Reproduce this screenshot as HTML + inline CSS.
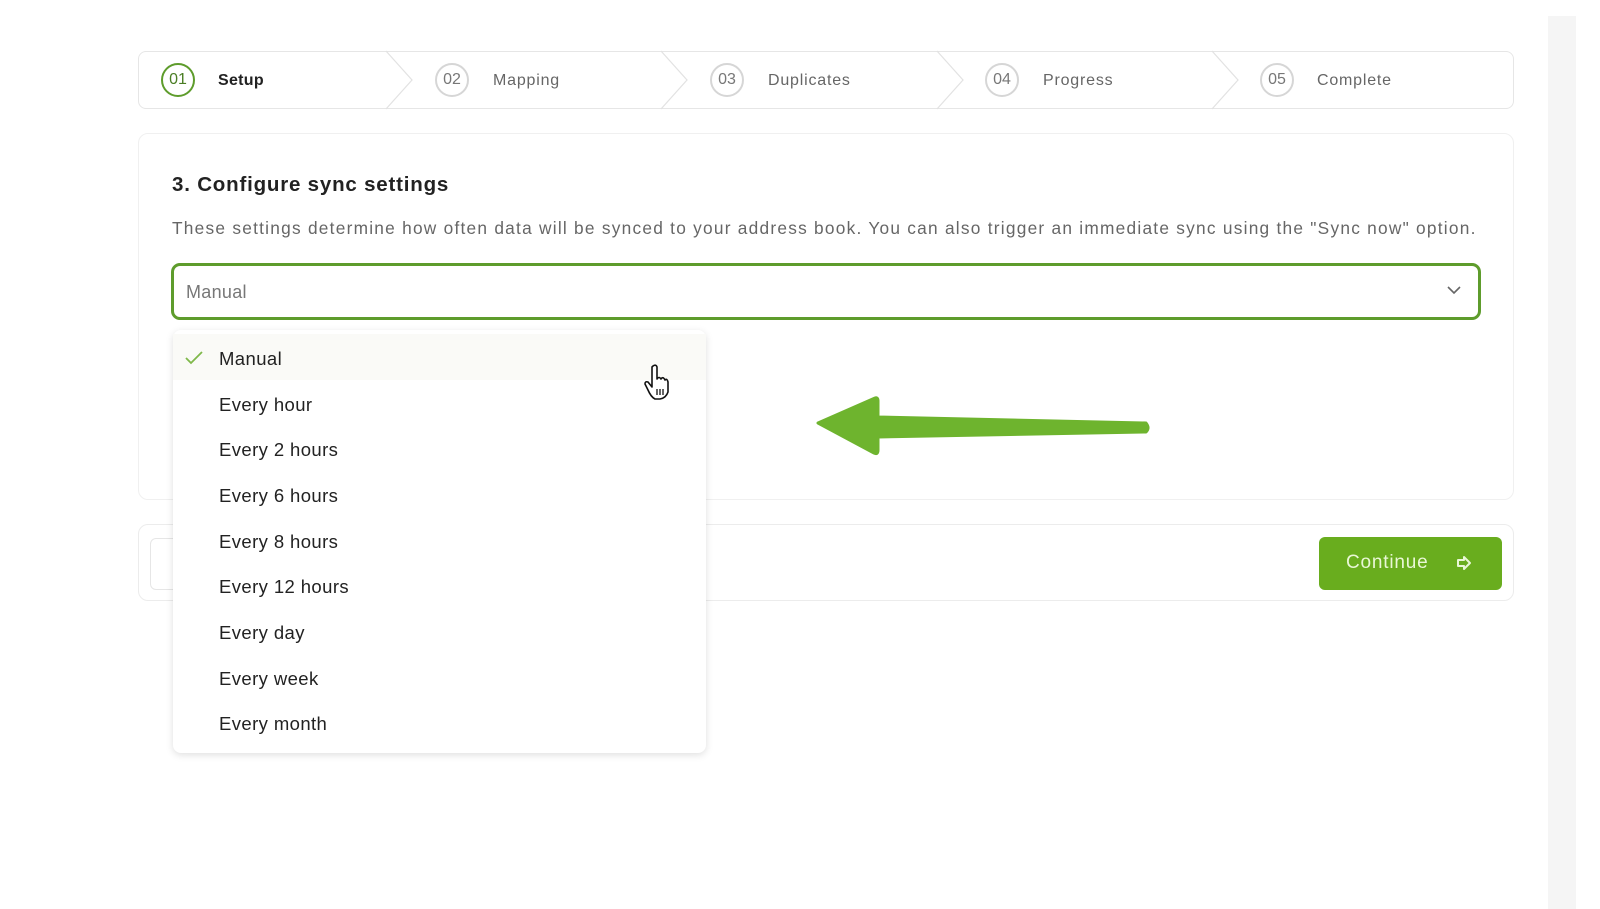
<!DOCTYPE html>
<html><head><meta charset="utf-8"><style>
*{box-sizing:border-box;margin:0;padding:0}
body{width:1600px;height:909px;background:#fff;font-family:"Liberation Sans",sans-serif;position:relative;overflow:hidden;color:#222}
.abs{position:absolute}
.steps{left:138px;top:51px;width:1376px;height:58px;border:1px solid #e6e6e6;border-radius:8px}
.circ{width:34px;height:34px;border-radius:50%;border:2px solid #d6d6d6;color:#777;font-size:16px;display:flex;align-items:center;justify-content:center;top:63px}
.lbl{top:72px;font-size:16px;color:#666;letter-spacing:0.8px}
.card{left:138px;top:133px;width:1376px;height:367px;border:1px solid #f0f0f0;border-radius:10px}
.sel{left:171px;top:263px;width:1310px;height:57px;border:3px solid #5e9c2c;border-radius:9px;font-size:18px;color:#777;padding:16px 0 0 12px;letter-spacing:0.3px}
.dd{left:173px;top:330px;width:533px;height:423px;background:#fff;border-radius:8px;box-shadow:0 2px 8px rgba(0,0,0,.13)}
.it{position:absolute;left:46px;font-size:18.5px;color:#222;letter-spacing:0.4px}
.bot{left:138px;top:524px;width:1376px;height:77px;border:1px solid #ececec;border-radius:10px}
.btn{left:1319px;top:537px;width:183px;height:53px;background:#69ad1e;border-radius:6px;color:#e9f7d6;font-size:19px;padding:15px 0 0 27px;letter-spacing:0.8px}
</style></head><body>
<div class="abs" style="left:1548px;top:16px;width:28px;height:893px;background:#f5f5f5"></div>
<div class="abs steps"></div>
<svg class="abs" style="left:0;top:0" width="1600" height="120">
<g fill="none" stroke="#e2e2e2" stroke-width="1.2">
<path d="M386 51 L412 80 L386 109"/><path d="M661 51 L687 80 L661 109"/><path d="M937 51 L963 80 L937 109"/><path d="M1212 51 L1238 80 L1212 109"/></g></svg>
<div class="abs circ" style="left:161px;border-color:#5e9c2c;color:#4a7d24">01</div>
<div class="abs lbl" style="left:218px;color:#222;font-weight:bold;letter-spacing:0.3px">Setup</div>
<div class="abs circ" style="left:435px">02</div><div class="abs lbl" style="left:493px">Mapping</div>
<div class="abs circ" style="left:710px">03</div><div class="abs lbl" style="left:768px">Duplicates</div>
<div class="abs circ" style="left:985px">04</div><div class="abs lbl" style="left:1043px">Progress</div>
<div class="abs circ" style="left:1260px">05</div><div class="abs lbl" style="left:1317px">Complete</div>
<div class="abs card"></div>
<div class="abs" style="left:172px;top:173px;font-size:20.5px;font-weight:bold;color:#222;letter-spacing:0.8px">3. Configure sync settings</div>
<div class="abs" style="left:172px;top:218px;font-size:17.3px;color:#666;white-space:nowrap;letter-spacing:1.25px">These settings determine how often data will be synced to your address book. You can also trigger an immediate sync using the "Sync now" option.</div>
<div class="abs sel">Manual</div>
<svg class="abs" style="left:1447px;top:285px" width="14" height="10"><path d="M1 2 L7 8 L13 2" fill="none" stroke="#666" stroke-width="1.6"/></svg>
<div class="abs bot"></div>
<div class="abs" style="left:150px;top:538px;width:40px;height:52px;border:1px solid #e6e6e6;border-radius:6px"></div>
<div class="abs btn">Continue</div>
<svg class="abs" style="left:1456px;top:555px" width="16" height="16"><path d="M2 5 H8 V2 L14 8 L8 14 V11 H2 Z" fill="none" stroke="#e9f7d6" stroke-width="2" stroke-linejoin="round"/></svg>
<div class="abs dd">
<div style="position:absolute;left:0;top:4px;width:533px;height:46px;background:#fafaf7"></div>
<svg style="position:absolute;left:12px;top:21px" width="18" height="14"><path d="M1 7 L6 12 L17 1" fill="none" stroke="#7fb84a" stroke-width="1.8"/></svg>
<div class="it" style="top:18px">Manual</div>
<div class="it" style="top:64px">Every hour</div>
<div class="it" style="top:109px">Every 2 hours</div>
<div class="it" style="top:155px">Every 6 hours</div>
<div class="it" style="top:201px">Every 8 hours</div>
<div class="it" style="top:246px">Every 12 hours</div>
<div class="it" style="top:292px">Every day</div>
<div class="it" style="top:338px">Every week</div>
<div class="it" style="top:383px">Every month</div>
</div>
<svg class="abs" style="left:640px;top:362px" width="36" height="40"><path d="M13 4 Q16 2 17 5 L17 17 Q19 14 21 17 Q23 14 25 18 Q27 16 28 20 L28 30 Q26 36 20 37 L15 37 Q11 35 8 28 L5 22 Q5 19 8 20 L12 25 L12 5 Z" fill="#fff" stroke="#111" stroke-width="1.6" stroke-linejoin="round"/><path d="M17 27v6M20 27v6M23 27v6" stroke="#111" stroke-width="1.3"/></svg>
<svg class="abs" style="left:800px;top:390px" width="360" height="70"><path d="M18 33 L75 8 Q78 7 78 11 L78 27 L346 33 Q350 38 346 42 L78 47 L78 60 Q78 65 74 63 Z" fill="#6eb42e" stroke="#6eb42e" stroke-width="3" stroke-linejoin="round"/></svg>
</body></html>
